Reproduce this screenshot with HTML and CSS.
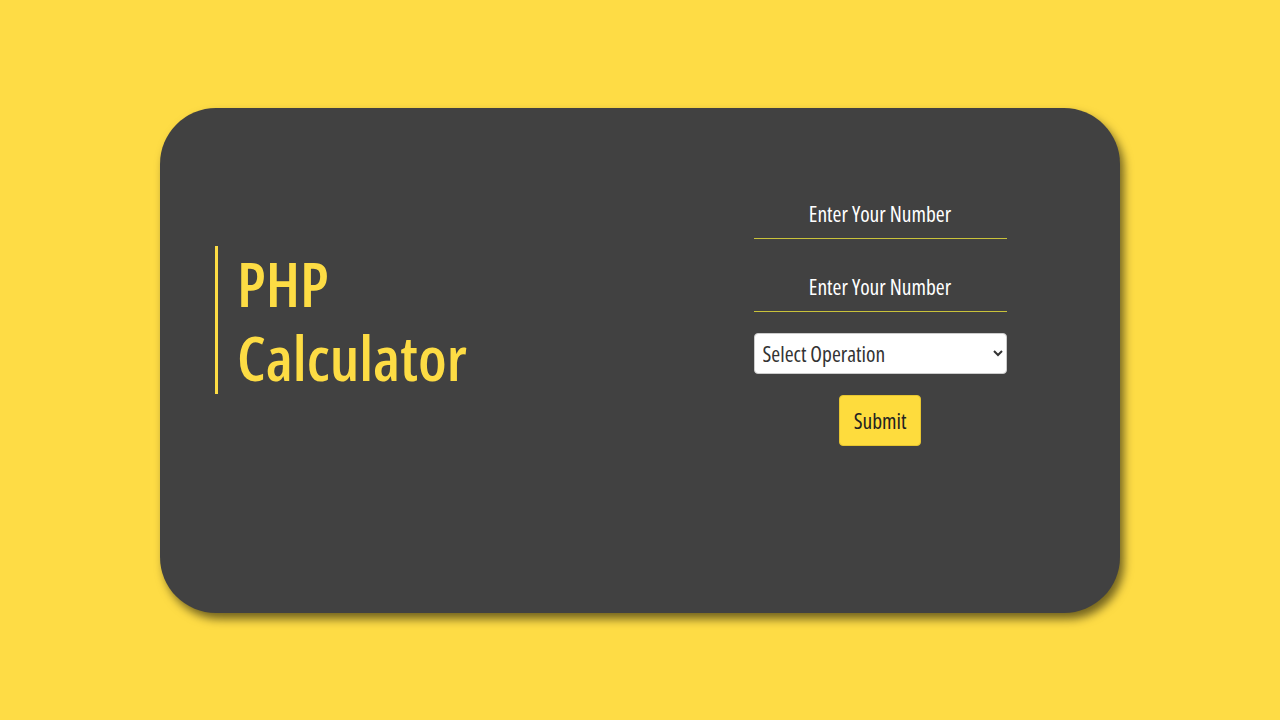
FILE: index.html
```html
<!DOCTYPE html>
<html lang="en">
<head>
<meta charset="utf-8">
<title>PHP Calculator</title>
<link rel="stylesheet" href="styles.css">
</head>
<body>
<main class="page">
  <section class="card">
    <div class="side side-title">
      <h1 class="title"><span class="title-line">PHP</span><span class="title-line">Calculator</span></h1>
    </div>
    <div class="side side-form">
      <form class="calc-form">
        <input class="num-input" type="text" placeholder="Enter Your Number">
        <input class="num-input" type="text" placeholder="Enter Your Number">
        <select class="op-select">
          <option>Select Operation</option>
        </select>
        <button class="submit-btn" type="button">Submit</button>
      </form>
    </div>
  </section>
</main>
</body>
</html>
```
FILE: styles.css
```css
* { box-sizing: border-box; }
html, body { margin: 0; height: 100%; }
body {
  background: #fedc45;
  font-family: "Open Sans", "Noto Sans", sans-serif;
  font-stretch: 75%;
}
.page {
  height: 720px;
  display: flex;
  justify-content: center;
  padding-top: 108px;
}
.card {
  width: 960px;
  height: 505px;
  background: #414141;
  border-radius: 56px;
  box-shadow: 4px 6px 10px rgba(0, 0, 0, 0.55);
  display: grid;
  grid-template-columns: 1fr 1fr;
}
.side { display: flex; min-width: 0; }
.side-title {
  align-items: flex-start;
  padding: 138px 0 0 55px;
}
.title {
  margin: 0;
  border-left: 3px solid #fddc44;
  padding: 0 0 0 19px;
  color: #fddc44;
  font-size: 62px;
  font-weight: 600;
  line-height: 74px;
}
.title-line { display: block; }
.side-form {
  justify-content: center;
  align-items: flex-start;
  padding-top: 88px;
}
.calc-form {
  width: 253px;
  display: flex;
  flex-direction: column;
  align-items: center;
}
.num-input {
  width: 100%;
  height: 43px;
  margin-bottom: 30px;
  padding: 0 0 8px;
  background: transparent;
  border: 0;
  border-bottom: 1px solid #c9c23a;
  color: #fff;
  text-align: center;
  font: inherit;
  font-stretch: 75%;
  font-size: 21.5px;
  outline: none;
}
.num-input:nth-of-type(2) { margin-bottom: 21px; }
.num-input::placeholder { color: #fff; opacity: 1; }
.op-select {
  width: 100%;
  height: 41px;
  border: 1px solid #ccc;
  border-radius: 4px;
  background: #fff;
  color: #333;
  font: inherit;
  font-stretch: 75%;
  font-size: 21.5px;
  padding: 0 4px;
  margin-bottom: 21px;
}
.submit-btn {
  width: 82px;
  height: 51px;
  background: #fedc3d;
  border: 1px solid #e6c530;
  border-radius: 4px;
  color: #222;
  font: inherit;
  font-stretch: 75%;
  font-size: 21.5px;
  padding: 0;
  cursor: pointer;
}
```
